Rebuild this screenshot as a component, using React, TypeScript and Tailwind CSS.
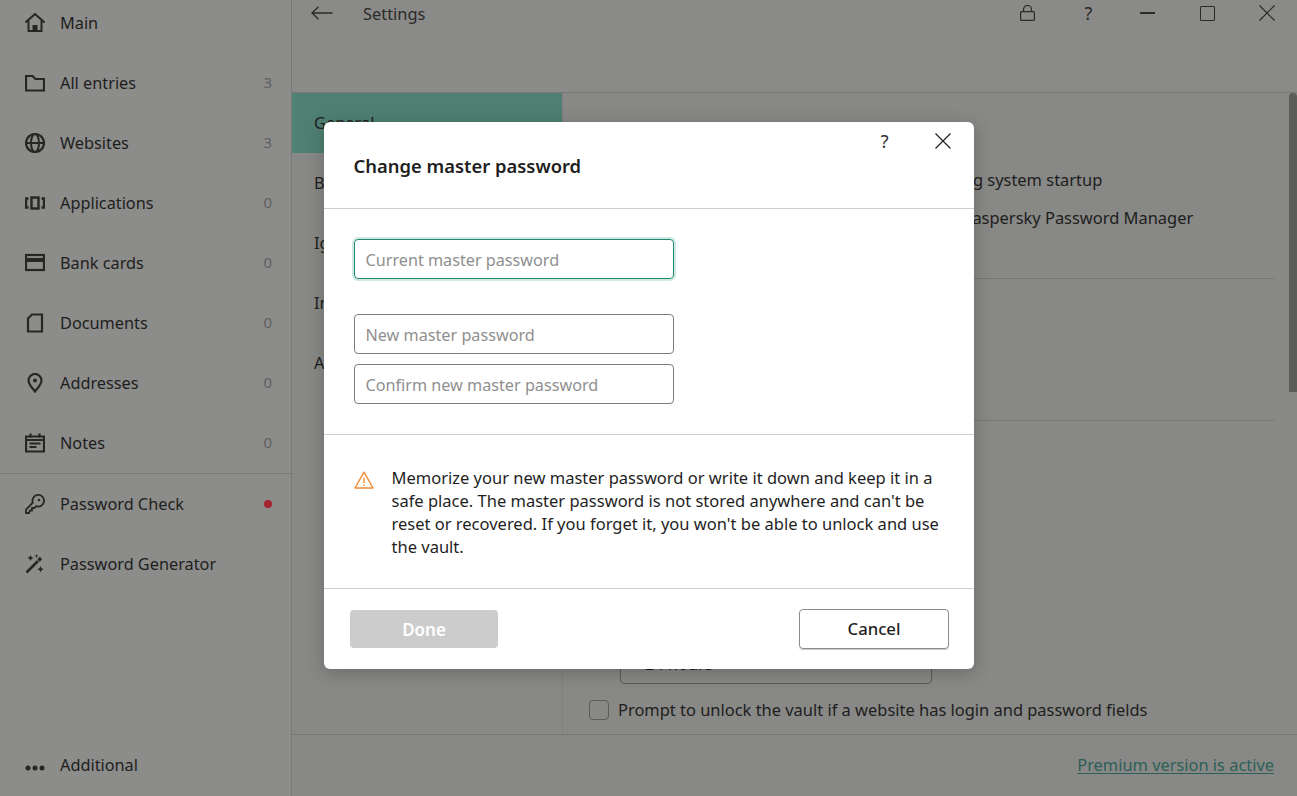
import type { ReactNode } from 'react'

const FONT = 'font-["Noto_Sans","Open_Sans",sans-serif]'

function Glyph({ children, className = 'size-5' }: { children: ReactNode; className?: string }) {
  return (
    <svg viewBox="0 0 20 20" fill="none" stroke="currentColor" strokeWidth="2.200" className={className}>
      {children}
    </svg>
  )
}

const NAV_ITEMS: Array<{ label: string; count?: string; dot?: boolean; icon: ReactNode }> = [
  {
    label: 'Main',
    icon: (
      <>
        <path d="M0.500 9.500 10 1l9.500 8.500" strokeWidth="2" />
        <path d="M3.500 7.500V18h13V7.500" strokeWidth="2" />
        <rect x="7.500" y="12" width="5" height="6" fill="currentColor" stroke="none" />
      </>
    ),
  },
  {
    label: 'All entries',
    count: '3',
    icon: <path d="M1 3h6.500l3 3H19v11.500H1z" />,
  },
  {
    label: 'Websites',
    count: '3',
    icon: (
      <>
        <circle cx="10" cy="10" r="9" />
        <ellipse cx="10" cy="10" rx="4" ry="9" strokeWidth="2" />
        <path d="M1 10h18" strokeWidth="2" />
      </>
    ),
  },
  {
    label: 'Applications',
    count: '0',
    icon: (
      <>
        <rect x="6.500" y="4.500" width="7" height="11" strokeWidth="2.400" />
        <path d="M3.500 5.500H1v9h2.500M16.500 5.500H19v9h-2.500" strokeWidth="2.400" />
      </>
    ),
  },
  {
    label: 'Bank cards',
    count: '0',
    icon: (
      <>
        <rect x="1" y="2" width="18" height="15" />
        <rect x="1" y="5" width="18" height="4" fill="currentColor" stroke="none" />
      </>
    ),
  },
  {
    label: 'Documents',
    count: '0',
    icon: <path d="M7 1.500h10v17H3V5.500z" />,
  },
  {
    label: 'Addresses',
    count: '0',
    icon: (
      <>
        <path d="M10 18.500C7 14.500 3.500 11.500 3.500 7.500a6.500 6.500 0 0 1 13 0c0 4-3.500 7-6.500 11z" />
        <circle cx="10" cy="7.500" r="2" fill="currentColor" stroke="none" />
      </>
    ),
  },
  {
    label: 'Notes',
    count: '0',
    icon: (
      <>
        <path d="M1 3.500h18v15H1z" />
        <path d="M5.500 0.500v4M14.500 0.500v4" />
        <path d="M1 7h18M4.500 10.500h11M4.500 14h7" strokeWidth="2" />
      </>
    ),
  },
  {
    label: 'Password Check',
    dot: true,
    icon: (
      <>
        <path d="M1 19v-3.500l6.800-6.800a5.800 5.800 0 1 1 3.500 3.500L9.500 14H7v2.500H5L4 19z" strokeWidth="1.800" />
        <circle cx="14" cy="6" r="1.300" fill="currentColor" stroke="none" />
      </>
    ),
  },
  {
    label: 'Password Generator',
    icon: (
      <>
        <path d="M1.500 18.500 13 7" strokeWidth="2.600" />
        <path d="M13.500 6.500 16 4" strokeWidth="3.400" />
        <path
          d="M5.500 1 6.500 3 8.500 4 6.500 5 5.500 7 4.500 5 2.500 4 4.500 3zM15.500 12l1 2.200 2.200 1-2.200 1-1 2.200-1-2.200-2.200-1 2.200-1zM11.500 0l.6 1.400 1.400.6-1.400.6-.6 1.400-.6-1.400-1.400-.6 1.400-.6z"
          fill="currentColor"
          stroke="none"
        />
      </>
    ),
  },
]

function NavRow({ label, count, dot, icon }: { label: string; count?: string; dot?: boolean; icon: ReactNode }) {
  return (
    <div className="flex h-[60px] items-center pl-[25px] pr-[19px] text-[#1e1e1d]">
      <span className="text-[#262625]">
        <Glyph>{icon}</Glyph>
      </span>
      <span className="ml-[15px] flex-1 text-[16.300px]">{label}</span>
      {count ? <span className="-mt-[2px] text-[15px] text-[#5f5f5e]">{count}</span> : null}
      {dot ? <span className="size-2 rounded-full bg-[#a5232f]" /> : null}
    </div>
  )
}

function Sidebar() {
  return (
    <aside className="flex w-[292px] shrink-0 flex-col border-r border-[#787877] bg-[#8c8c8b]">
      <div className="-mt-[7px]">
        {NAV_ITEMS.slice(0, 8).map((item) => (
          <NavRow key={item.label} {...item} />
        ))}
      </div>
      <div className="border-t border-[#787877]">
        {NAV_ITEMS.slice(8).map((item) => (
          <NavRow key={item.label} {...item} />
        ))}
      </div>
      <div className="mt-auto">
        <div className="flex h-[61px] items-center pl-[25px] text-[#1e1e1d]">
          <svg viewBox="0 0 20 6" className="mt-1 h-[6px] w-5 fill-[#262625]">
            <circle cx="3" cy="3" r="2.500" />
            <circle cx="10" cy="3" r="2.500" />
            <circle cx="17" cy="3" r="2.500" />
          </svg>
          <span className="ml-[15px] text-[16.300px]">Additional</span>
        </div>
      </div>
    </aside>
  )
}

function TitleBar() {
  return (
    <header className="h-[93px] shrink-0 border-b border-[#787877] bg-[#8a8a88]">
      <div className="flex h-[26px] items-center text-[#2a2a29]">
        <svg viewBox="0 0 22 14" fill="none" stroke="currentColor" strokeWidth="1.300" className="ml-[19px] h-[14px] w-[22px]">
          <path d="M21.500 7H1M7.500 0.800 1 7l6.500 6.200" />
        </svg>
        <span className="ml-[30px] mt-[2px] text-[16.400px]">Settings</span>
        <div className="ml-auto flex items-center">
          <div className="flex w-[60px] justify-center">
            <svg viewBox="0 0 15 16" fill="none" stroke="currentColor" strokeWidth="1.200" className="h-4 w-[15px]">
              <rect x="0.600" y="6.600" width="13.800" height="8.800" rx="1" />
              <path d="M3.500 6.600V4.500a4 4 0 0 1 8 0v2.100" />
            </svg>
          </div>
          <div className="flex w-[60px] justify-center pl-[3px] text-[18px] leading-none">?</div>
          <div className="flex w-[60px] justify-center">
            <div className="h-[1.500px] w-[15px] bg-[#2a2a29]" />
          </div>
          <div className="flex w-[60px] justify-center">
            <div className="size-[15px] rounded-[1px] border-[1.500px] border-[#2a2a29]" />
          </div>
          <div className="flex w-[60px] justify-center pr-[1px]">
            <svg viewBox="0 0 16 16" fill="none" stroke="currentColor" strokeWidth="1.200" className="size-4">
              <path d="M.5.5l15 15M15.500.5l-15 15" />
            </svg>
          </div>
        </div>
      </div>
    </header>
  )
}

function SettingsNav() {
  const items = ['General', 'Backup', 'Ignore', 'Import', 'About']
  return (
    <nav className="w-[271px] shrink-0 border-r border-[#818180] text-[16.400px] text-[#1e1e1d]">
      {items.map((item, index) => (
        <div
          key={item}
          className={
            index === 0
              ? 'flex h-[60px] items-center border-l-[3px] border-[#4f8475] bg-[#4f7f72] pl-[19px]'
              : 'flex h-[60px] items-center pl-[22px]'
          }
        >
          {item}
        </div>
      ))}
    </nav>
  )
}

function CheckRow({ children }: { children: ReactNode }) {
  return (
    <div className="flex h-[38px] items-center whitespace-nowrap text-[16.450px] text-[#1e1e1d]">
      <span className="size-[20px] shrink-0 rounded-[4px] border border-[#5c5c5b]" />
      <span className="ml-[9px]">{children}</span>
    </div>
  )
}

function SettingsPanel() {
  return (
    <div className="relative min-w-0 flex-1 overflow-hidden bg-[#888886] pl-[26px] pr-[23px] pt-[68px]">
      <CheckRow>Run Kaspersky Password Manager at operating system startup</CheckRow>
      <CheckRow>Display all notifications plus reminders from Kaspersky Password Manager</CheckRow>
      <div className="mt-[41px] h-px bg-[#777776]" />
      <div className="mt-[141px] h-px bg-[#777776]" />
      <div className="ml-[31px] mt-[223px] flex h-[40px] w-[312px] items-center rounded-[4px] border border-[#5c5c5b] pl-[24px] text-[16.400px] text-[#1e1e1d]">
        24 hours
      </div>
      <div className="mt-[7px]">
        <CheckRow>Prompt to unlock the vault if a website has login and password fields</CheckRow>
      </div>
      <div className="absolute right-0 top-0 h-[299px] w-2 rounded-t-[4px] bg-[#5c5c5b]" />
    </div>
  )
}

function Footer() {
  return (
    <footer className="flex h-[62px] shrink-0 items-center justify-end border-t border-[#787877] bg-[#888886] pr-[23px]">
      <span className="text-[16.400px] text-[#2d5f58] underline underline-offset-2">Premium version is active</span>
    </footer>
  )
}

function MasterPasswordField({ placeholder, focused }: { placeholder: string; focused?: boolean }) {
  return (
    <div
      className={
        focused
          ? 'flex h-[40px] w-[320px] items-center rounded-[4px] border border-[#1d8a70] pl-[11px] pt-[2px] text-[16.200px] text-[#8f8f8f] ring-[2px] ring-[#cfe9e2]'
          : 'flex h-[40px] w-[320px] items-center rounded-[4px] border border-[#7d7d7d] pl-[11px] pt-[2px] text-[16.200px] text-[#8f8f8f]'
      }
    >
      {placeholder}
    </div>
  )
}

function ChangePasswordDialog() {
  return (
    <div className="absolute inset-0 flex items-center justify-center">
      <div className="mb-[5px] flex h-[547px] w-[650px] flex-col rounded-[6px] bg-white text-[#1f1f1f] shadow-[0_4px_18px_rgba(0,0,0,0.22)]">
        <div className="relative h-[87px] shrink-0 border-b border-[#cfcfcf]">
          <h1 className="pl-[30px] pt-[30px] text-[18.400px] font-semibold leading-[28px]">Change master password</h1>
          <div className="absolute right-[85px] top-[7px] text-[18px] leading-[24px] text-[#333]">?</div>
          <svg
            viewBox="0 0 16 16"
            fill="none"
            stroke="currentColor"
            strokeWidth="1.200"
            className="absolute right-[23px] top-[11px] size-4"
          >
            <path d="M.5.5l15 15M15.500.5l-15 15" />
          </svg>
        </div>
        <div className="h-[226px] shrink-0 border-b border-[#cfcfcf] pl-[30px] pt-[30px]">
          <MasterPasswordField placeholder="Current master password" focused />
          <div className="mt-[35px] flex flex-col gap-[10px]">
            <MasterPasswordField placeholder="New master password" />
            <MasterPasswordField placeholder="Confirm new master password" />
          </div>
        </div>
        <div className="flex h-[154px] shrink-0 border-b border-[#cfcfcf] pl-[30px] pt-[31px]">
          <svg viewBox="0 0 20 18" fill="none" className="mt-[5px] h-[18px] w-[20px] shrink-0 text-[#f08a33]" stroke="currentColor">
            <path d="M10 1.200 19 17H1z" strokeWidth="1.400" strokeLinejoin="round" />
            <path d="M10 6.500v5.500M10 13.500v1.500" strokeWidth="1.400" />
          </svg>
          <p className="ml-[18px] text-[16.500px] leading-[23px]">
            Memorize your new master password or write it down and keep it in a<br />
            safe place. The master password is not stored anywhere and can't be<br />
            reset or recovered. If you forget it, you won't be able to unlock and use<br />
            the vault.
          </p>
        </div>
        <div className="flex flex-1 items-center justify-between pl-[26px] pr-[25px]">
          <div className="flex h-[38px] w-[148px] items-center justify-center rounded-[4px] bg-[#cccccc] pl-[1px] pt-[2px] text-[17px] font-semibold text-white">
            Done
          </div>
          <div className="flex h-[40px] w-[150px] items-center justify-center rounded-[4px] border border-[#8c8c8c] pl-[1px] text-[16.700px] font-medium shadow-[0_1px_1px_rgba(0,0,0,0.2)]">
            Cancel
          </div>
        </div>
      </div>
    </div>
  )
}

export default function App() {
  return (
    <div className={`${FONT} relative flex h-[796px] w-full overflow-hidden bg-[#888886]`}>
      <Sidebar />
      <main className="flex min-w-0 flex-1 flex-col">
        <TitleBar />
        <div className="flex min-h-0 flex-1">
          <SettingsNav />
          <SettingsPanel />
        </div>
        <Footer />
      </main>
      <ChangePasswordDialog />
    </div>
  )
}
